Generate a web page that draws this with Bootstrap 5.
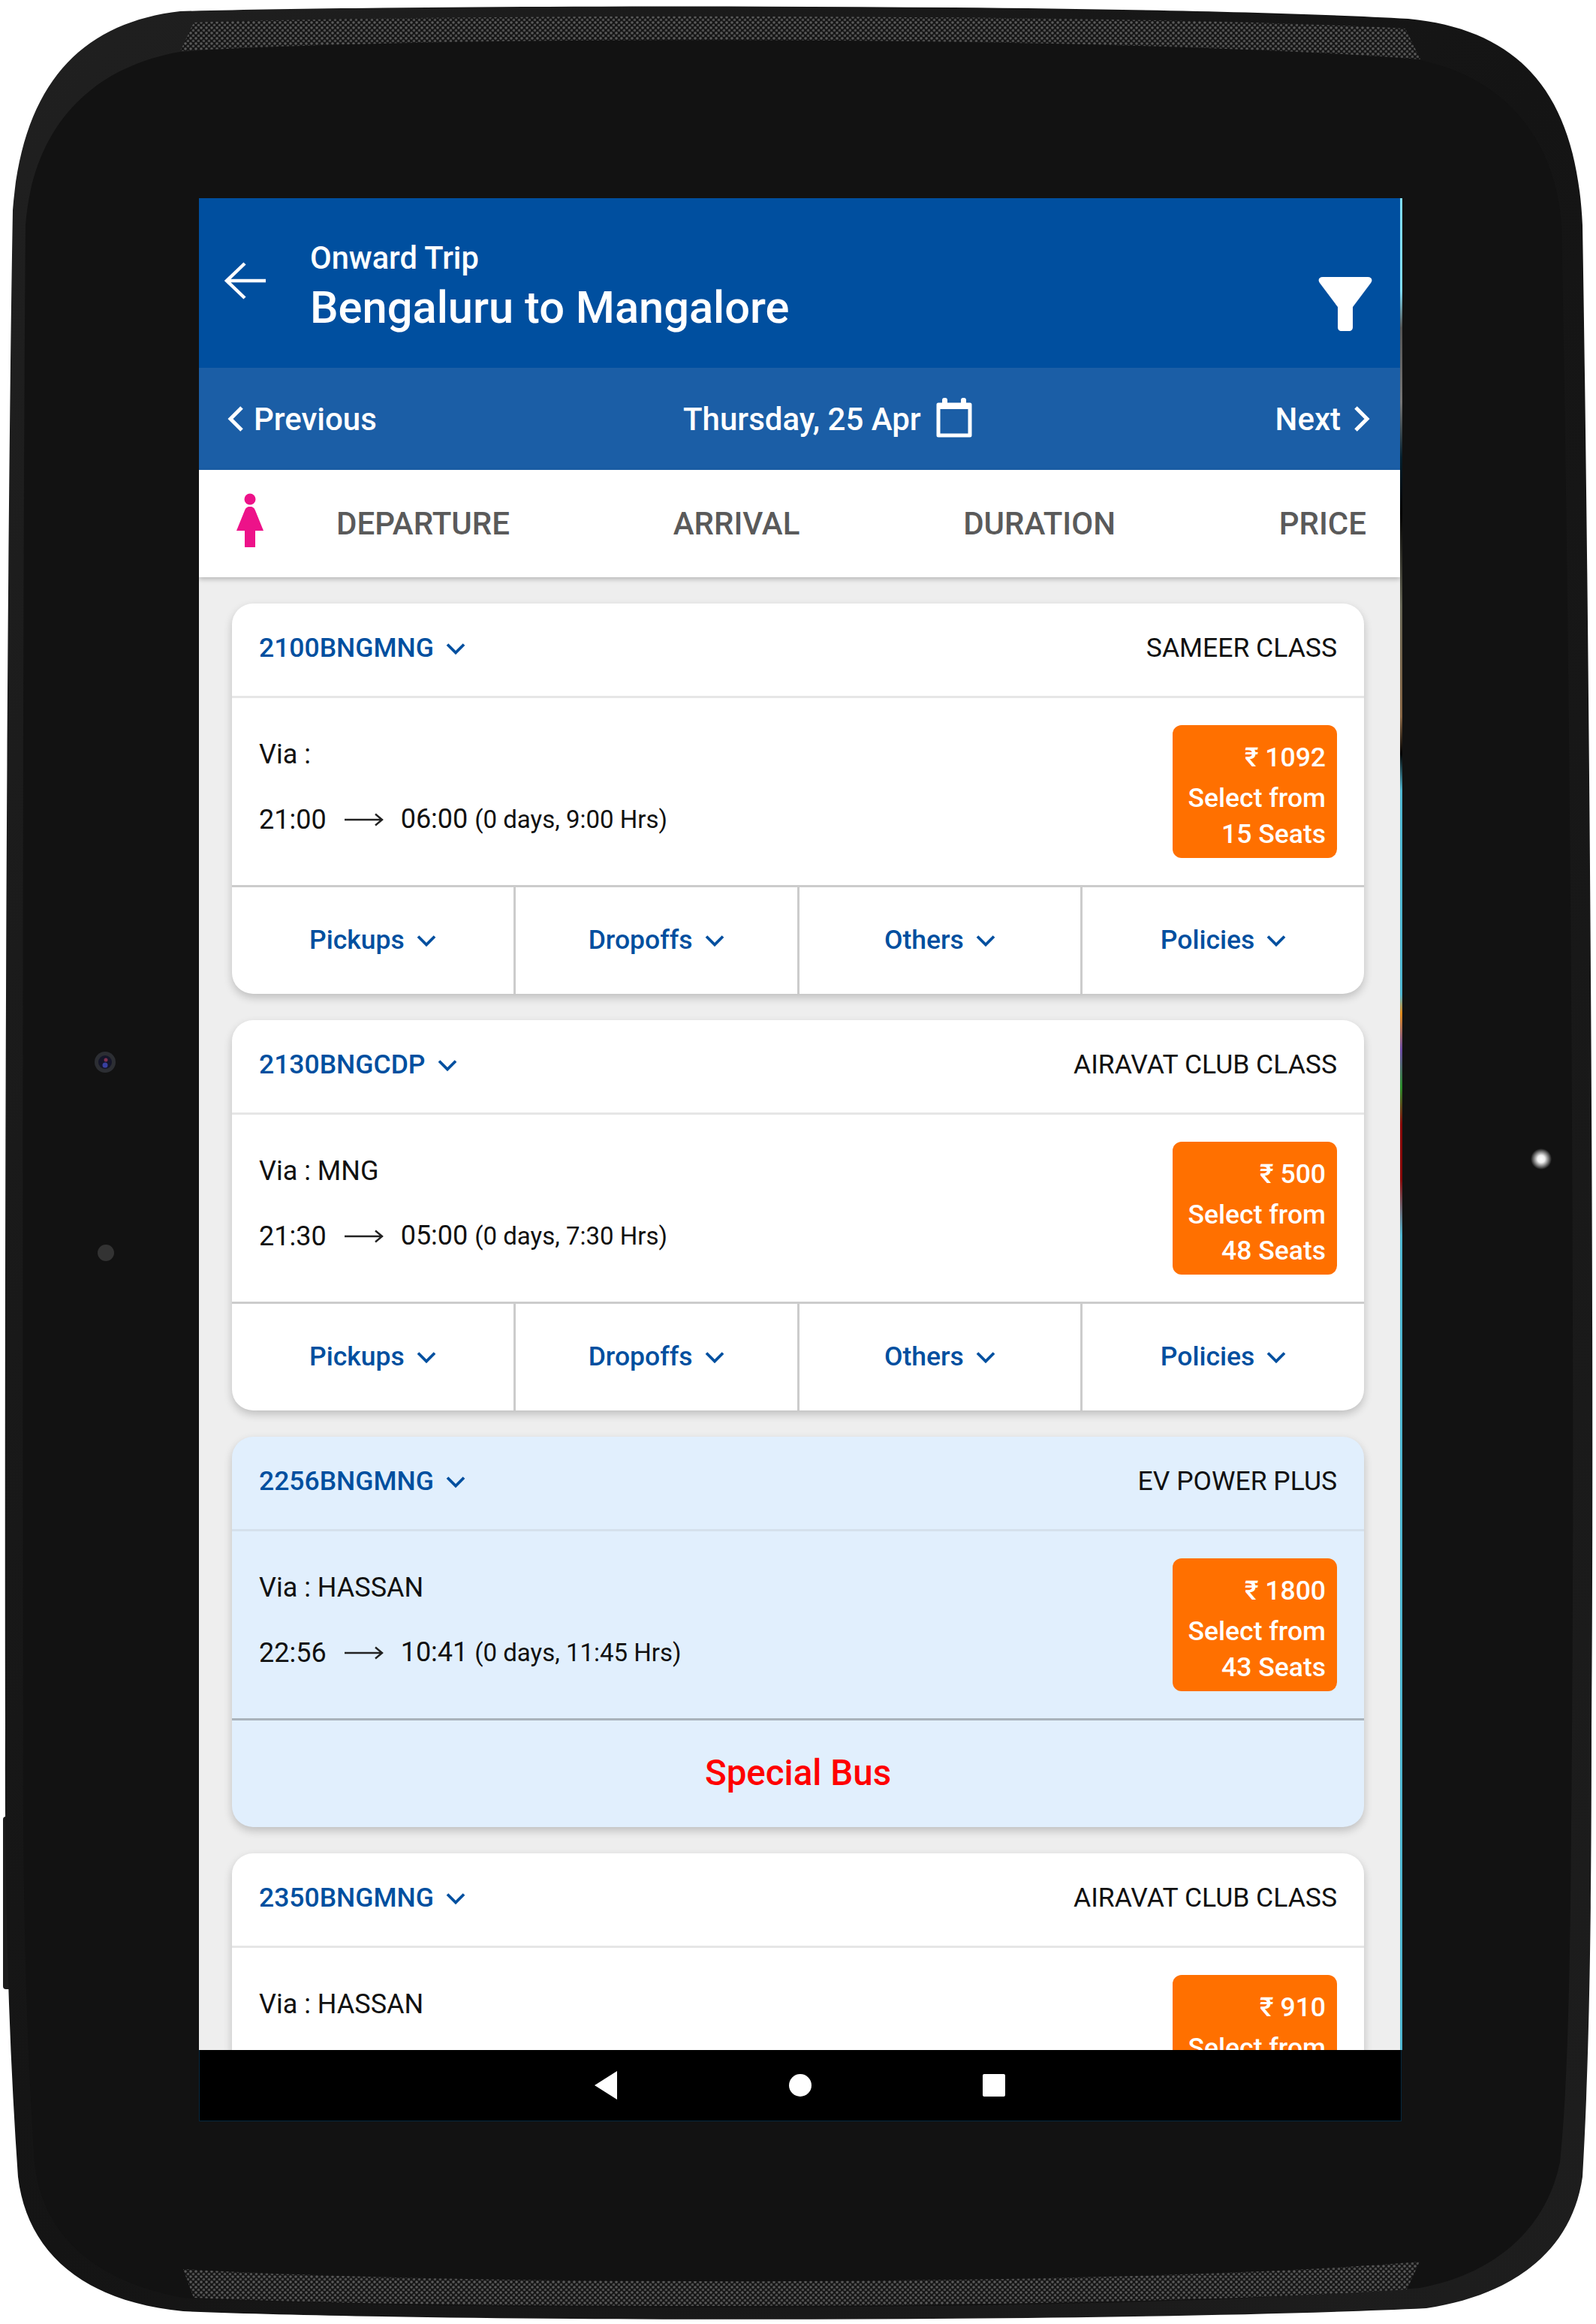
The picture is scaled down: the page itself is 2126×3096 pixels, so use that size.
<!DOCTYPE html>
<html lang="en">
<head>
  <meta charset="UTF-8" />
  <title>Bus Search Results</title>
  <link href="https://cdn.jsdelivr.net/npm/bootstrap@5.3.3/dist/css/bootstrap.min.css" rel="stylesheet" />
  <style>
    body { margin: 0; background: #fff; font-family: Roboto, "Liberation Sans", sans-serif; color: #111; }
    .device { position: relative; width: 2126px; height: 3096px; padding: 264px 0 0 265px; overflow: hidden; }
    .device-art { position: absolute; left: 0; top: 0; width: 2126px; height: 3096px; }
    .screen { position: relative; width: 1600px; height: 2467px; display: flex; flex-direction: column; overflow: hidden; background: #eee; }
    .app-bar { height: 226px; flex: none; background: #004f9f; color: #fff; padding-left: 34px; padding-right: 37px; }
    .back-icon { width: 56px; height: 50px; margin-right: 58px; flex: none; margin-top: -6px; }
    .trip-block { padding-top: 56px; }
    .trip-small { font-size: 41.6px; font-weight: 500; line-height: 48px; }
    .trip-big { font-size: 59.6px; font-weight: 500; line-height: 72px; margin-top: 6px; }
    .filter-icon { width: 72px; height: 73px; margin-top: 104px; }
    .date-bar { height: 136px; flex: none; background: #1b5ea6; color: #fff; font-size: 42px; font-weight: 500; padding: 0 39px 0 37px; position: relative; }
    .date-mid { position: absolute; left: 645px; top: 0; height: 136px; gap: 20px; }
    .date-cal { margin-top: -4px; }
    .chev-side { width: 24px; height: 36px; }
    .prev-link { gap: 12px; }
    .next-link { gap: 16px; }
    .sort-bar { height: 143px; flex: none; background: #fff; padding: 0 45px 0 50px; box-shadow: 0 3px 6px rgba(0,0,0,.22); position: relative; z-index: 2; }
    .person-icon { width: 36px; height: 72px; margin-right: 97px; flex: none; margin-top: -10px; }
    .sort-items { flex: 1; color: #5a5a5a; font-size: 42px; font-weight: 500; }
    .trip-list { flex: 1; min-height: 0; padding: 35px 48px 0 44px; overflow: hidden; }
    .trip-card { border: 0; border-radius: 28px; background: #fff; height: 520px; margin-bottom: 35px; box-shadow: 0 5px 12px rgba(0,0,0,.2); overflow: hidden; }
    .trip-card.special { background: #e1effd; }
    .trip-head { height: 126px; flex: none; padding: 0 36px 3px; border-bottom: 3px solid #e6e6e6; font-size: 35.5px; }
    .special .trip-head { border-bottom-color: #d5e1ec; }
    .service-no { color: #004f9f; font-weight: 500; }
    .chev-down { width: 26px; height: 16px; margin-left: 16px; }
    .trip-body { height: 252px; flex: none; padding: 0 36px; border-bottom: 3px solid #ccc; position: relative; }
    .special .trip-body { border-bottom-color: #a9b3bc; }
    .via-line { font-size: 36px; line-height: 44px; padding-top: 53px; }
    .time-line { font-size: 36px; line-height: 44px; margin-top: 42px; }
    .time-line small { font-size: 33px; }
    .long-arrow { width: 52px; height: 18px; margin: 0 23px 0 24px; }
    .price-box { position: absolute; right: 36px; top: 36px; width: 219px; height: 177px; border-radius: 12px; background: #ff7000; color: #fff; text-align: right; padding: 19px 15px 0 0; font-size: 35.5px; font-weight: 500; line-height: 48px; }
    .price-box .price-top { margin-bottom: 6px; }
    .trip-foot { height: 142px; }
    .foot-cell { flex: 1; color: #004f9f; font-size: 35.5px; font-weight: 500; border-right: 3px solid #ccc; }
    .foot-cell:last-child { border-right: 0; }
    .special-label { height: 142px; color: #f00; font-size: 47.5px; font-weight: 500; }
    .nav-strip { position: absolute; left: 265px; top: 2731px; width: 1602px; height: 95px; background: #000; border: 1px solid #06283f; border-top: 0; }
    .edge-strip { position: absolute; left: 1865px; top: 264px; width: 3px; height: 2467px; background: linear-gradient(#7fdcf5 0, #7fdcf5 5%, #555 7%, #777 11%, #05202e 14%, #000 17%, #665 22%, #864 28%, #000 30%, #4fb6d0 32%, #4fb6d0 43%, #e08a1a 44%, #6b4aa5 46%, #2a8f2a 48%, #8a0a0a 50%, #8a0a0a 53%, #4fb6d0 56%, #4fb6d0 100%); }
  </style>
</head>
<body>
  <svg width="0" height="0" class="position-absolute">
    <symbol id="chevDown" viewBox="0 0 26 16"><path d="M2 2.5 13 13.5 24 2.5" fill="none" stroke="currentColor" stroke-width="3.8"/></symbol>
    <symbol id="longArrow" viewBox="0 0 52 18"><path d="M0 9H50M41 1.5 50 9 41 16.5" fill="none" stroke="#222" stroke-width="2.4"/></symbol>
  </svg>

  <div class="device">
    <!-- tablet body -->
    <svg class="device-art" viewBox="0 0 2126 3096">
      <defs>
        <pattern id="grill" width="7" height="7" patternUnits="userSpaceOnUse">
          <rect width="7" height="7" fill="#161616"/>
          <circle cx="2" cy="2" r="1.8" fill="#5a5a5a"/>
          <circle cx="5.5" cy="5.5" r="1.8" fill="#4c4c4c"/>
        </pattern>
        <linearGradient id="rim" x1="0" y1="0" x2="1" y2="1">
          <stop offset="0" stop-color="#202020"/>
          <stop offset=".5" stop-color="#141414"/>
          <stop offset="1" stop-color="#1e1e1e"/>
        </linearGradient>
        <radialGradient id="glint">
          <stop offset="0" stop-color="#fff"/>
          <stop offset=".35" stop-color="#eee"/>
          <stop offset="1" stop-color="#eee" stop-opacity="0"/>
        </radialGradient>
      </defs>
      <rect x="4" y="2420" width="14" height="230" rx="4" fill="#1c1c1c"/>
      <path d="M240 15C600 6 1500 4 1876 25C2030 40 2100 130 2108 300C2118 900 2124 1800 2120 2300C2120 2600 2116 2760 2108 2900C2092 3010 2000 3060 1900 3075C1500 3094 620 3094 244 3079C110 3066 36 3000 24 2900C10 2700 6 2500 7 2300C6 1700 8 800 17 280C30 110 110 30 240 15Z" fill="url(#rim)"/>
      <path d="M240 69C620 44 1500 44 1890 80C1990 100 2070 170 2080 300C2092 900 2098 1800 2094 2300C2092 2600 2090 2760 2078 2880C2060 2970 1990 3030 1891 3048C1500 3080 620 3080 244 3061C130 3040 56 2980 46 2880C34 2700 30 2500 31 2300C30 1700 30 800 34 300C44 170 120 90 240 69Z" fill="#121212"/>
      <path d="M258 30C620 18 1500 18 1872 38L1892 79C1500 48 620 46 240 68Z" fill="url(#grill)"/>
      <path d="M244 3023C620 3046 1500 3046 1891 3013L1874 3050C1500 3076 620 3078 258 3061Z" fill="url(#grill)"/>
      <circle cx="140" cy="1415" r="14" fill="#2c2e33"/>
      <circle cx="140" cy="1415" r="9" fill="#15162a"/>
      <circle cx="140" cy="1419" r="3.5" fill="#3840a0"/>
      <circle cx="141" cy="1412" r="2.5" fill="#803050"/>
      <circle cx="141" cy="1669" r="11" fill="#333"/>
      <circle cx="2053" cy="1544" r="14" fill="url(#glint)"/>
    </svg>

    <div class="screen">
      <div class="app-bar d-flex">
        <svg class="back-icon align-self-center" viewBox="0 0 56 50"><path d="M55 25H4M27 2 3 25 27 48" fill="none" stroke="#fff" stroke-width="4.5"/></svg>
        <div class="flex-grow-1 trip-block">
          <div class="trip-small">Onward Trip</div>
          <div class="trip-big">Bengaluru to Mangalore</div>
        </div>
        <svg class="filter-icon" viewBox="0 0 72 73"><path d="M6 1H66C71 1 73 5 70 9L46 41V68C46 71 44 73 41 73H31C28 73 26 71 26 68V41L2 9C-1 5 1 1 6 1Z" fill="#fff"/></svg>
      </div>

      <div class="date-bar d-flex justify-content-between align-items-center">
        <div class="d-flex align-items-center prev-link">
          <svg class="chev-side" viewBox="0 0 24 36"><path d="M20 3 5 18 20 33" fill="none" stroke="#fff" stroke-width="5"/></svg>
          <span>Previous</span>
        </div>
        <div class="date-mid d-flex align-items-center">
          <span>Thursday, 25 Apr</span>
          <svg class="date-cal" width="48" height="54" viewBox="0 0 48 54"><path d="M3 10H45V51H3Z" fill="none" stroke="#fff" stroke-width="5" stroke-linejoin="round"/><path d="M3 10H45V16H3Z" fill="#fff"/><rect x="8" y="1" width="7" height="12" rx="3" fill="#fff"/><rect x="33" y="1" width="7" height="12" rx="3" fill="#fff"/></svg>
        </div>
        <div class="d-flex align-items-center next-link">
          <span>Next</span>
          <svg class="chev-side" viewBox="0 0 24 36"><path d="M4 3 19 18 4 33" fill="none" stroke="#fff" stroke-width="5"/></svg>
        </div>
      </div>

      <div class="sort-bar d-flex align-items-center">
        <svg class="person-icon" viewBox="0 0 36 72"><circle cx="18" cy="8" r="7.5" fill="#ed1289"/><path d="M18 18C22 18 24 20 25 23L36 50H25V72H11V50H0L11 23C12 20 14 18 18 18Z" fill="#ed1289"/></svg>
        <div class="sort-items d-flex justify-content-between">
          <span>DEPARTURE</span><span>ARRIVAL</span><span>DURATION</span><span>PRICE</span>
        </div>
      </div>

      <div class="trip-list">
        <div class="card trip-card">
          <div class="trip-head d-flex justify-content-between align-items-center">
            <div class="d-flex align-items-center service-no">2100BNGMNG<svg class="chev-down"><use href="#chevDown"/></svg></div>
            <span>SAMEER CLASS</span>
          </div>
          <div class="trip-body">
            <div class="via-line">Via :</div>
            <div class="time-line d-flex align-items-center">21:00<svg class="long-arrow"><use href="#longArrow"/></svg><span>06:00 <small>(0 days, 9:00 Hrs)</small></span></div>
            <div class="price-box"><div class="price-top">₹ 1092</div>Select from<br>15 Seats</div>
          </div>
          <div class="trip-foot d-flex">
            <div class="foot-cell d-flex align-items-center justify-content-center">Pickups<svg class="chev-down"><use href="#chevDown"/></svg></div>
            <div class="foot-cell d-flex align-items-center justify-content-center">Dropoffs<svg class="chev-down"><use href="#chevDown"/></svg></div>
            <div class="foot-cell d-flex align-items-center justify-content-center">Others<svg class="chev-down"><use href="#chevDown"/></svg></div>
            <div class="foot-cell d-flex align-items-center justify-content-center">Policies<svg class="chev-down"><use href="#chevDown"/></svg></div>
          </div>
        </div>

        <div class="card trip-card">
          <div class="trip-head d-flex justify-content-between align-items-center">
            <div class="d-flex align-items-center service-no">2130BNGCDP<svg class="chev-down"><use href="#chevDown"/></svg></div>
            <span>AIRAVAT CLUB CLASS</span>
          </div>
          <div class="trip-body">
            <div class="via-line">Via : MNG</div>
            <div class="time-line d-flex align-items-center">21:30<svg class="long-arrow"><use href="#longArrow"/></svg><span>05:00 <small>(0 days, 7:30 Hrs)</small></span></div>
            <div class="price-box"><div class="price-top">₹ 500</div>Select from<br>48 Seats</div>
          </div>
          <div class="trip-foot d-flex">
            <div class="foot-cell d-flex align-items-center justify-content-center">Pickups<svg class="chev-down"><use href="#chevDown"/></svg></div>
            <div class="foot-cell d-flex align-items-center justify-content-center">Dropoffs<svg class="chev-down"><use href="#chevDown"/></svg></div>
            <div class="foot-cell d-flex align-items-center justify-content-center">Others<svg class="chev-down"><use href="#chevDown"/></svg></div>
            <div class="foot-cell d-flex align-items-center justify-content-center">Policies<svg class="chev-down"><use href="#chevDown"/></svg></div>
          </div>
        </div>

        <div class="card trip-card special">
          <div class="trip-head d-flex justify-content-between align-items-center">
            <div class="d-flex align-items-center service-no">2256BNGMNG<svg class="chev-down"><use href="#chevDown"/></svg></div>
            <span>EV POWER PLUS</span>
          </div>
          <div class="trip-body">
            <div class="via-line">Via : HASSAN</div>
            <div class="time-line d-flex align-items-center">22:56<svg class="long-arrow"><use href="#longArrow"/></svg><span>10:41 <small>(0 days, 11:45 Hrs)</small></span></div>
            <div class="price-box"><div class="price-top">₹ 1800</div>Select from<br>43 Seats</div>
          </div>
          <div class="special-label d-flex align-items-center justify-content-center">Special Bus</div>
        </div>

        <div class="card trip-card">
          <div class="trip-head d-flex justify-content-between align-items-center">
            <div class="d-flex align-items-center service-no">2350BNGMNG<svg class="chev-down"><use href="#chevDown"/></svg></div>
            <span>AIRAVAT CLUB CLASS</span>
          </div>
          <div class="trip-body">
            <div class="via-line">Via : HASSAN</div>
            <div class="price-box"><div class="price-top">₹ 910</div>Select from</div>
          </div>
        </div>
      </div>
    </div>

    <div class="edge-strip"></div>
    <div class="nav-strip d-flex align-items-center justify-content-center">
      <svg width="560" height="40" viewBox="0 0 560 40">
        <path d="M0 20 30 1V39Z" fill="#fff" transform="translate(6 0)"/>
        <circle cx="280" cy="20" r="15" fill="#fff"/>
        <rect x="523" y="5" width="30" height="30" rx="2" fill="#fff"/>
      </svg>
    </div>
  </div>
</body>
</html>
